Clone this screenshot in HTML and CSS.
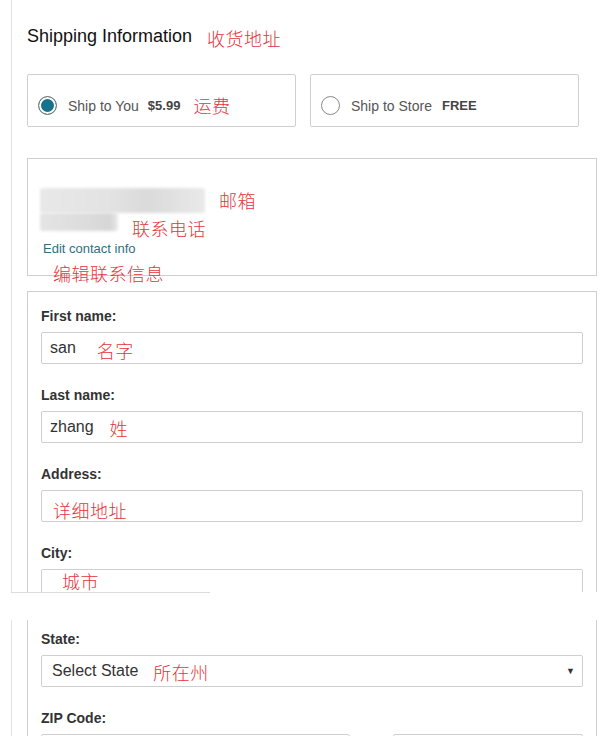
FILE: index.html
```html
<!DOCTYPE html>
<html lang="en">
<head>
<meta charset="utf-8">
<title>Shipping Information</title>
<link rel="stylesheet" href="styles.css">
</head>
<body>
<div class="top-piece">
  <div class="sheet">
    <div class="title-row">
      <h2 class="title">Shipping Information</h2>
      <span class="note note-title">收货地址</span>
    </div>
    <div class="ship-row">
      <div class="ship-option">
        <span class="radio radio-on"></span>
        <span class="ship-name">Ship to You</span>
        <span class="ship-price">$5.99</span>
        <span class="note note-fee">运费</span>
      </div>
      <div class="ship-option">
        <span class="radio"></span>
        <span class="ship-name">Ship to Store</span>
        <span class="ship-price ship-price-free">FREE</span>
      </div>
    </div>
    <div class="contact-box">
      <div class="email-line">
        <span class="blur blur-email"></span>
        <span class="note note-email">邮箱</span>
      </div>
      <div class="phone-line">
        <span class="blur blur-phone"></span>
        <span class="note note-phone">联系电话</span>
      </div>
      <div class="edit-link">Edit contact info</div>
      <div class="note note-edit">编辑联系信息</div>
    </div>
    <div class="form-box">
      <div class="field">
        <div class="field-label">First name:</div>
        <div class="input"><span class="value">san</span><span class="note note-first">名字</span></div>
      </div>
      <div class="field">
        <div class="field-label">Last name:</div>
        <div class="input"><span class="value">zhang</span><span class="note note-last">姓</span></div>
      </div>
      <div class="field">
        <div class="field-label">Address:</div>
        <div class="input"><span class="note note-address">详细地址</span></div>
      </div>
      <div class="field">
        <div class="field-label">City:</div>
        <div class="input input-city"><span class="note note-city">城市</span></div>
      </div>
    </div>
  </div>
</div>
<div class="cut-edge"></div>
<div class="bottom-piece">
  <div class="sheet">
    <div class="form-box form-box-cont">
      <div class="field">
        <div class="field-label">State:</div>
        <div class="input select"><span class="value">Select State</span><span class="note note-state">所在州</span><span class="arrow">▼</span></div>
      </div>
      <div class="field">
        <div class="field-label">ZIP Code:</div>
        <div class="zip-row">
          <div class="input zip-main"></div>
          <div class="input zip-ext"></div>
        </div>
      </div>
    </div>
  </div>
</div>
</body>
</html>
```
FILE: styles.css
```css
html, body {
  margin: 0;
  padding: 0;
  background: #fff;
  overflow: hidden;
}
body {
  font-family: "Liberation Sans", Arial, sans-serif;
  color: #333;
}
.note {
  font-family: "Noto Sans CJK SC", "Noto Sans", sans-serif;
  font-weight: 300;
  font-size: 18px;
  line-height: 24px;
  color: #e3353a;
  letter-spacing: 0.5px;
  white-space: nowrap;
}
.top-piece {
  height: 592px;
  overflow: hidden;
}
.sheet {
  margin-left: 11px;
  border-left: 1px solid #e2e2e2;
  padding-left: 15px;
  width: 570px;
  height: 100%;
}
.title-row {
  display: flex;
  align-items: center;
  padding-top: 24px;
  height: 24px;
}
.title {
  margin: 0;
  font-size: 18px;
  font-weight: normal;
  line-height: 24px;
  color: #111;
}
.note-title {
  margin-left: 15px;
  padding-top: 4px;
}
.ship-row {
  display: flex;
  gap: 14px;
  margin-top: 26px;
}
.ship-option {
  box-sizing: border-box;
  width: 269px;
  height: 53px;
  border: 1px solid #cfcfcf;
  border-radius: 2px;
  display: flex;
  align-items: center;
  padding: 10px 0 0 10px;
}
.radio {
  box-sizing: border-box;
  width: 19px;
  height: 19px;
  border: 1px solid #8a8a8a;
  border-radius: 50%;
  background: #fff;
  flex: none;
}
.radio-on {
  background: #16738d;
  box-shadow: inset 0 0 0 2px #fff;
  border-color: #777;
}
.ship-name {
  margin-left: 11px;
  font-size: 14px;
  color: #555;
}
.ship-price {
  margin-left: 9px;
  font-size: 13px;
  font-weight: bold;
  color: #444;
}
.ship-price-free {
  margin-left: 10px;
}
.note-fee {
  margin-left: 13px;
  margin-top: -2px;
}
.contact-box {
  box-sizing: border-box;
  margin-top: 31px;
  height: 118px;
  border: 1px solid #cfcfcf;
  padding: 28px 0 0 12px;
}
.email-line {
  display: flex;
  align-items: center;
  height: 26px;
}
.blur {
  display: block;
  flex: none;
  filter: blur(1.5px);
  border-radius: 3px;
}
.blur-email {
  width: 165px;
  height: 25px;
  background: linear-gradient(90deg, #e8e8e8 0%, #e2e2e2 45%, #dadada 65%, #e9e9e9 100%);
}
.note-email {
  margin-left: 14px;
}
.phone-line {
  display: flex;
  align-items: flex-start;
  height: 20px;
}
.blur-phone {
  width: 78px;
  height: 18px;
  background: linear-gradient(90deg, #e4e4e4 0%, #dcdcdc 60%, #d6d6d6 90%, #eaeaea 100%);
}
.note-phone {
  margin-left: 14px;
  margin-top: 3px;
}
.edit-link {
  margin: 8px 0 0 3px;
  font-size: 13px;
  line-height: 16px;
  color: #2f6f80;
}
.note-edit {
  margin: 4px 0 0 13px;
}
.form-box {
  box-sizing: border-box;
  margin-top: 15px;
  border: 1px solid #cfcfcf;
  border-bottom: none;
  padding: 16px 13px 0 13px;
  height: 400px;
}
.form-box-cont {
  margin-top: 0;
  border-top: none;
  padding-top: 11px;
  height: 140px;
}
.field {
  margin-bottom: 23px;
}
.field-label {
  font-size: 14px;
  font-weight: bold;
  line-height: 16px;
  color: #333;
  margin-bottom: 8px;
}
.input {
  box-sizing: border-box;
  height: 32px;
  border: 1px solid #cfcfcf;
  border-radius: 2px;
  display: flex;
  align-items: center;
  padding-left: 8px;
  font-size: 16px;
  color: #333;
}
.note-first {
  margin-left: 21px;
  margin-top: 4px;
}
.note-last {
  margin-left: 16px;
  margin-top: 1px;
}
.note-address {
  margin-left: 3px;
  margin-top: 8px;
}
.input-city {
  align-items: flex-start;
}
.note-city {
  margin-left: 12px;
  margin-top: 3px;
  line-height: 16px;
}
.select {
  padding-left: 10px;
}
.note-state {
  margin-left: 15px;
  margin-top: 2px;
}
.arrow {
  margin-left: auto;
  margin-right: 7px;
  font-size: 9px;
  color: #333;
}
.zip-row {
  display: flex;
  gap: 43px;
}
.zip-main {
  width: 309px;
}
.zip-ext {
  width: 190px;
}
.cut-edge {
  margin-left: 11px;
  width: 199px;
  height: 1px;
  background: #dcdcdc;
}
.bottom-piece {
  margin-top: 27px;
  height: 140px;
  overflow: hidden;
}
```
